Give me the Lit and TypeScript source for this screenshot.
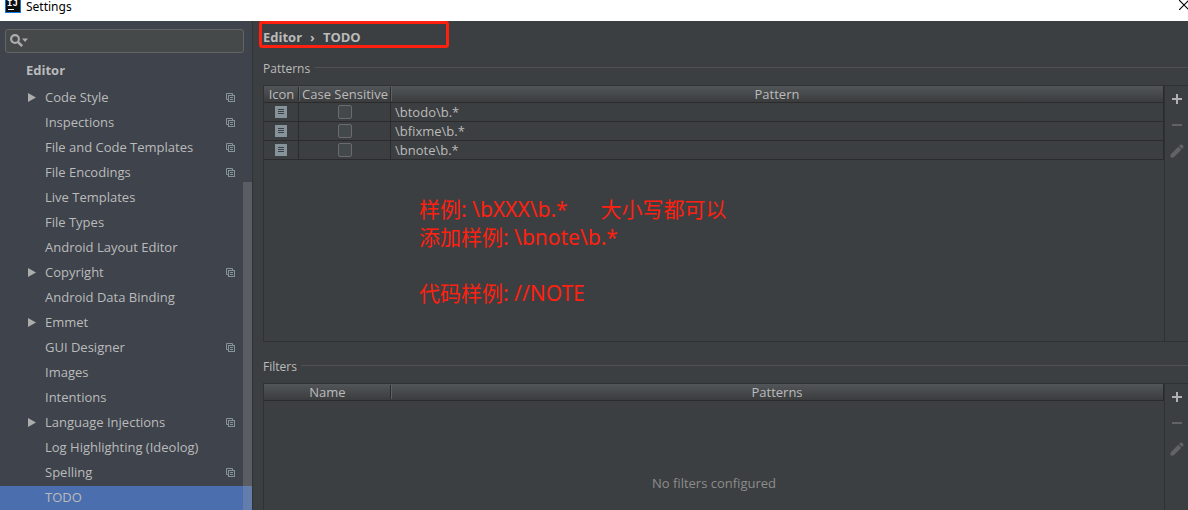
import { LitElement, html, css, svg, nothing } from "lit";
import { customElement, property } from "lit/decorators.js";
import { classMap } from "lit/directives/class-map.js";

interface TreeItem {
  label: string;
  group?: boolean;
  project?: boolean;
  selected?: boolean;
}

const ITEMS: TreeItem[] = [
  { label: "Code Style", group: true, project: true },
  { label: "Inspections", project: true },
  { label: "File and Code Templates", project: true },
  { label: "File Encodings", project: true },
  { label: "Live Templates" },
  { label: "File Types" },
  { label: "Android Layout Editor" },
  { label: "Copyright", group: true, project: true },
  { label: "Android Data Binding" },
  { label: "Emmet", group: true },
  { label: "GUI Designer", project: true },
  { label: "Images" },
  { label: "Intentions" },
  { label: "Language Injections", group: true, project: true },
  { label: "Log Highlighting (Ideolog)" },
  { label: "Spelling", project: true },
  { label: "TODO", selected: true },
];

const PATTERNS = ["\\btodo\\b.*", "\\bfixme\\b.*", "\\bnote\\b.*"];

const projectIcon = svg`<svg width="10" height="9" viewBox="0 0 10 9" fill="none" stroke="#87939a" aria-hidden="true">
  <path d="M2 6.5H.5v-6h6V2"/><rect x="2.5" y="2.5" width="6" height="6"/><path d="M4 4.5h3M4 6.5h3"/></svg>`;

@customElement("settings-tree")
class SettingsTree extends LitElement {
  static styles = css`
    :host {
      display: block;
      position: relative;
      width: 252px;
      flex: none;
      overflow: hidden;
      background: #3e434c;
      border-right: 1px solid #313335;
      color: #bbbbbb;
    }
    .search {
      display: flex;
      align-items: center;
      height: 22px;
      margin: 8px 8px 5px 5px;
      padding-left: 4px;
      background: #45494a;
      border: 1px solid #646464;
      border-radius: 3px;
    }
    .search svg { flex: none; }
    .field {
      flex: 1;
      min-width: 0;
      background: none;
      border: 0;
      outline: 0;
      color: inherit;
      font: inherit;
    }
    .heading {
      margin: 0 0 3px;
      padding-left: 26px;
      font-size: 13px;
      line-height: 25px;
      font-weight: 700;
    }
    .list { list-style: none; margin: 0; padding: 0; }
    .row {
      display: flex;
      align-items: center;
      box-sizing: border-box;
      height: 25px;
      padding: 0 16px 2px 28px;
      color: inherit;
      text-decoration: none;
      white-space: nowrap;
    }
    .arrow { width: 17px; flex: none; display: flex; }
    .label { flex: 1; line-height: 23px; }
    .selected { background: #4b6eaf; }
    .scroll {
      position: absolute;
      right: 0;
      top: 161px;
      bottom: 0;
      width: 9px;
      background: rgba(166, 166, 166, 0.27);
    }
  `;

  render() {
    return html`
      <div class="search">
        <svg width="20" height="14" viewBox="0 0 20 14" aria-hidden="true">
          <circle cx="5" cy="5" r="3.9" fill="none" stroke="#adadad" stroke-width="2.1" />
          <path d="M7.8 7.8l4.4 4.4" stroke="#adadad" stroke-width="2.6" />
          <path d="M12 4.5h6L15 8z" fill="#adadad" />
        </svg>
        <input class="field" type="text" aria-label="Search settings" />
      </div>
      <h2 class="heading">Editor</h2>
      <ul class="list">
        ${ITEMS.map(
          (i) => html`<li>
            <a class=${classMap({ row: true, selected: !!i.selected })} href="#">
              <span class="arrow">
                ${i.group
                  ? svg`<svg width="8" height="9" viewBox="0 0 8 9" aria-hidden="true"><path d="M0 0L8 4.5 0 9z" fill="#adadad"/></svg>`
                  : nothing}
              </span>
              <span class="label">${i.label}</span>
              ${i.project ? projectIcon : nothing}
            </a>
          </li>`
        )}
      </ul>
      <div class="scroll"></div>
    `;
  }
}

@customElement("table-panel")
class TablePanel extends LitElement {
  @property() heading = "";

  static styles = css`
    :host { display: block; }
    .legend {
      display: flex;
      align-items: center;
      gap: 4px;
      height: 16px;
      line-height: 16px;
    }
    .title { margin: 0; font-size: 12px; font-weight: 400; }
    .rule { flex: 1; height: 1px; margin-bottom: 4px; background: #515151; }
    .frame {
      display: flex;
      height: 255px;
      margin-top: 8px;
      border: 1px solid #2f3133;
      border-right: 0;
    }
    .content {
      flex: 1;
      min-width: 0;
      position: relative;
      border-right: 1px solid #2f3133;
    }
    .tools {
      display: flex;
      flex-direction: column;
      width: 23px;
    }
    .tool {
      display: flex;
      align-items: center;
      justify-content: center;
      height: 26px;
      padding: 0;
      background: none;
      border: 0;
      color: #afb1b3;
    }
    .tool:disabled { color: #616365; }
  `;

  render() {
    return html`
      <div class="legend">
        <h3 class="title">${this.heading}</h3>
        <div class="rule"></div>
      </div>
      <div class="frame">
        <div class="content"><slot></slot></div>
        <div class="tools">
          <button class="tool" aria-label="Add">
            <svg width="12" height="12" viewBox="0 0 12 12"><path d="M5 1h2v4h4v2H7v4H5V7H1V5h4z" fill="currentColor" /></svg>
          </button>
          <button class="tool" aria-label="Remove" disabled>
            <svg width="12" height="12" viewBox="0 0 12 12"><path d="M1 5h10v2H1z" fill="currentColor" /></svg>
          </button>
          <button class="tool" aria-label="Edit" disabled>
            <svg width="14" height="14" viewBox="0 0 14 14" fill="currentColor">
              <path d="M.5 10.5l7.8-7.8 3 3-7.8 7.8h-3zM9 2l1.2-1.2q1-.7 2 0l1 1q.7 1 0 2L12 5z" />
            </svg>
          </button>
        </div>
      </div>
    `;
  }
}

@customElement("app-root")
class AppRoot extends LitElement {
  static styles = css`
    :host {
      display: flex;
      flex-direction: column;
      height: 100vh;
      overflow: hidden;
      background: #3c3f41;
      color: #bbbbbb;
      font: 13px/18px "Open Sans", "Noto Sans CJK SC", sans-serif;
    }
    .titlebar {
      display: flex;
      align-items: flex-start;
      gap: 5px;
      flex: none;
      height: 21px;
      padding-left: 5px;
      background: #ffffff;
      color: #000000;
    }
    .caption {
      flex: 1;
      margin: 0;
      font: 400 12px/13px "Noto Sans", sans-serif;
    }
    .close { display: flex; padding: 0; border: 0; background: none; }
    .logo-text { font: 700 9px "Liberation Mono", monospace; }
    .body { display: flex; flex: 1; min-height: 0; }
    .main { flex: 1; min-width: 0; padding-left: 10px; }
    .crumbs {
      display: flex;
      align-items: center;
      gap: 8px;
      box-sizing: border-box;
      width: 190px;
      height: 27px;
      margin: 0 0 13px -4px;
      padding: 5px 0 0 1px;
      border: 3px solid #ff2010;
      border-radius: 3px;
      font-weight: 700;
    }
    .crumb { color: inherit; text-decoration: none; }
    .second { margin-top: 17px; }
    .table {
      width: 100%;
      table-layout: fixed;
      border-collapse: separate;
      border-spacing: 0;
      border-right: 1px solid #2b2b2b;
    }
    .th {
      position: relative;
      height: 16px;
      padding: 0;
      border-bottom: 1px solid #2b2b2b;
      background: linear-gradient(#525658, #3a3c3e);
      font-weight: 400;
      line-height: 16px;
      white-space: nowrap;
    }
    .split::after {
      content: "";
      position: absolute;
      right: -1px;
      top: 1px;
      bottom: 1px;
      width: 1px;
      border-left: 1px solid #2b2b2b;
      background: #5f6264;
      z-index: 1;
    }
    .td {
      height: 18px;
      padding: 0;
      border-bottom: 1px solid #2b2b2b;
      border-right: 1px solid #2b2b2b;
      line-height: 18px;
      text-align: center;
    }
    .text { border-right: 0; padding-left: 4px; text-align: left; }
    .icon { display: block; margin: 0 auto; }
    .check {
      appearance: none;
      display: block;
      box-sizing: border-box;
      width: 14px;
      height: 14px;
      margin: 0 auto;
      background: #43494a;
      border: 1px solid #6b6b6b;
      border-radius: 2px;
    }
    .c-icon { width: 35px; }
    .c-case { width: 92px; }
    .c-name { width: 127px; }
    .empty {
      margin: 73px 0 0;
      text-align: center;
      color: #8c8c8c;
    }
    .note {
      position: absolute;
      left: 155px;
      top: 109px;
      margin: 0;
      color: #ff2010;
      font: 400 21px/28px "Noto Sans", "Noto Sans CJK SC", sans-serif;
      white-space: pre;
    }
  `;

  render() {
    return html`
      <header class="titlebar">
        <svg width="16" height="13" viewBox="0 3 16 13" aria-hidden="true">
          <rect x=".5" y=".5" width="15" height="15" fill="#101010" stroke="#1477e0" />
          <text class="logo-text" x="2" y="9" fill="#ffffff">IJ</text>
          <path d="M3 12.5h6" stroke="#ffffff" />
        </svg>
        <h1 class="caption">Settings</h1>
        <button class="close" aria-label="Close">
          <svg width="9" height="10" viewBox="0 0 9 10"><path d="M0 0l10 10M10 0L0 10" stroke="#000000" stroke-width="1.2" /></svg>
        </button>
      </header>
      <div class="body">
        <settings-tree></settings-tree>
        <main class="main">
          <nav class="crumbs" aria-label="Breadcrumb">
            <a class="crumb" href="#">Editor</a><span>›</span><span>TODO</span>
          </nav>
          <table-panel heading="Patterns">
            <table class="table">
              <colgroup><col class="c-icon" /><col class="c-case" /><col /></colgroup>
              <thead>
                <tr>
                  <th class="th split">Icon</th>
                  <th class="th split">Case Sensitive</th>
                  <th class="th">Pattern</th>
                </tr>
              </thead>
              <tbody>
                ${PATTERNS.map(
                  (p) => html`<tr>
                    <td class="td">
                      <svg class="icon" width="12" height="12" viewBox="0 0 12 12" aria-hidden="true">
                        <rect width="12" height="12" fill="#87939a" />
                        <path d="M3 3.5h6M3 5.5h6M3 7.5h6" stroke="#3c3f41" />
                      </svg>
                    </td>
                    <td class="td"><input class="check" type="checkbox" aria-label="Case sensitive ${p}" /></td>
                    <td class="td text">${p}</td>
                  </tr>`
                )}
              </tbody>
            </table>
            <p class="note">${"样例: \\bXXX\\b.*      大小写都可以\n添加样例: \\bnote\\b.*\n\n代码样例: //NOTE"}</p>
          </table-panel>
          <table-panel class="second" heading="Filters">
            <table class="table">
              <colgroup><col class="c-name" /><col /></colgroup>
              <thead>
                <tr><th class="th split">Name</th><th class="th">Patterns</th></tr>
              </thead>
            </table>
            <p class="empty">No filters configured</p>
          </table-panel>
        </main>
      </div>
    `;
  }
}
